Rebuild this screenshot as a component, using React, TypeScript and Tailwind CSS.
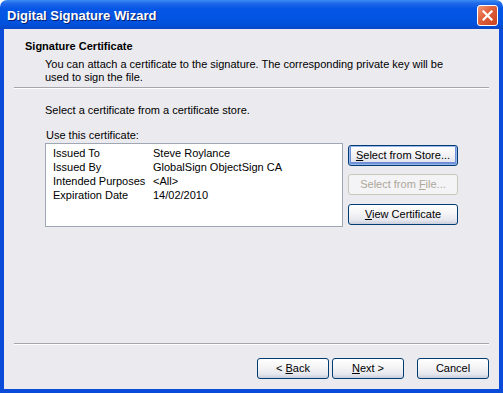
import React from 'react';

const font = "font-['Liberation_Sans',Arial,sans-serif]";

interface XpButtonProps {
  children: React.ReactNode;
  className?: string;
  disabled?: boolean;
  focused?: boolean;
}

const XpButton: React.FC<XpButtonProps> = ({ children, className = '', disabled, focused }) => (
  <div
    className={`h-[21px] flex items-center justify-center rounded-[3px] border text-[11px] leading-[13px] ${
      disabled
        ? 'border-[#C9C7BA] bg-[#F4F3F6] text-[#ACA899]'
        : 'border-[#003C74] text-black bg-[linear-gradient(to_bottom,#FFFFFF_0%,#F4F4F6_45%,#E6E7EE_80%,#C9CEDB_100%)]'
    } ${focused ? 'shadow-[inset_0_0_0_1px_#98B8EA,inset_0_-1px_0_2px_#6F8FD9]' : ''} ${className}`}
  >
    {children}
  </div>
);

const rows = [
  ['Issued To', 'Steve Roylance'],
  ['Issued By', 'GlobalSign ObjectSign CA'],
  ['Intended Purposes', '<All>'],
  ['Expiration Date', '14/02/2010'],
];

const Separator = () => (
  <div className="mx-[10px] h-[2px] border-t border-[#A6A5AB] border-b border-b-white" />
);

export default function App() {
  return (
    <div className={`w-[503px] h-[393px] flex flex-col bg-white text-black ${font}`}>
      <div className="h-[29px] shrink-0 rounded-t-[7px] flex items-center justify-between pl-[7px] pr-[5px] bg-[linear-gradient(to_bottom,#3C8DF5_0%,#1F68E8_12%,#0556E6_30%,#0254E2_60%,#0150DB_85%,#0A46C6_100%)]">
        <span className="text-[13px] leading-[16px] font-bold text-white pt-[3px] [text-shadow:1px_1px_0_#0A1F6A]">
          Digital Signature Wizard
        </span>
        <div className="w-[21px] h-[21px] mt-[1px] rounded-[3px] border border-white flex items-center justify-center bg-[linear-gradient(135deg,#F09A7A_0%,#E2643E_40%,#C8421E_100%)]">
          <svg width="11" height="11" viewBox="0 0 11 11">
            <path d="M1.5 1.5 L9.5 9.5 M9.5 1.5 L1.5 9.5" stroke="white" strokeWidth="2.2" strokeLinecap="square" />
          </svg>
        </div>
      </div>

      <div className="flex-1 flex flex-col bg-[#EBEAEF] border-x-4 border-b-4 border-[#0B4BD9]">
        <div className="pt-[11px] pl-[21px] text-[11px] leading-[13px] font-bold">Signature Certificate</div>
        <div className="mt-[5px] pl-[41px] w-[455px] text-[11px] leading-[13px]">
          You can attach a certificate to the signature. The corresponding private key will be used to sign the file.
        </div>
        <div className="mt-[3px]">
          <Separator />
        </div>

        <div className="mt-[15px] pl-[41px] text-[11px] leading-[13px]">Select a certificate from a certificate store.</div>
        <div className="mt-[12px] pl-[42px] text-[11px] leading-[13px]">Use this certificate:</div>

        <div className="mt-[1px] ml-[41px] flex gap-[5px]">
          <div className="w-[298px] h-[84px] bg-white border border-[#9FA6B4] pt-[2px] pl-[7px]">
            {rows.map(([label, value]) => (
              <div key={label} className="flex text-[11px] leading-[14px]">
                <span className="w-[100px]">{label}</span>
                <span>{value}</span>
              </div>
            ))}
          </div>
          <div className="flex flex-col pt-[2px]">
            <XpButton className="w-[110px]" focused>
              <span>
                <span className="underline">S</span>elect from Store...
              </span>
            </XpButton>
            <XpButton className="w-[110px] mt-[8px]" disabled>
              <span>
                Select from <span className="underline">F</span>ile...
              </span>
            </XpButton>
            <XpButton className="w-[110px] mt-[9px]">
              <span>
                <span className="underline">V</span>iew Certificate
              </span>
            </XpButton>
          </div>
        </div>

        <div className="mt-auto">
          <Separator />
          <div className="mt-[13px] pb-[10px] pr-[10px] flex justify-end">
            <XpButton className="w-[72px]">
              <span>
                &lt; <span className="underline">B</span>ack
              </span>
            </XpButton>
            <XpButton className="w-[72px] ml-[3px]">
              <span>
                <span className="underline">N</span>ext &gt;
              </span>
            </XpButton>
            <XpButton className="w-[72px] ml-[13px]">Cancel</XpButton>
          </div>
        </div>
      </div>
    </div>
  );
}
